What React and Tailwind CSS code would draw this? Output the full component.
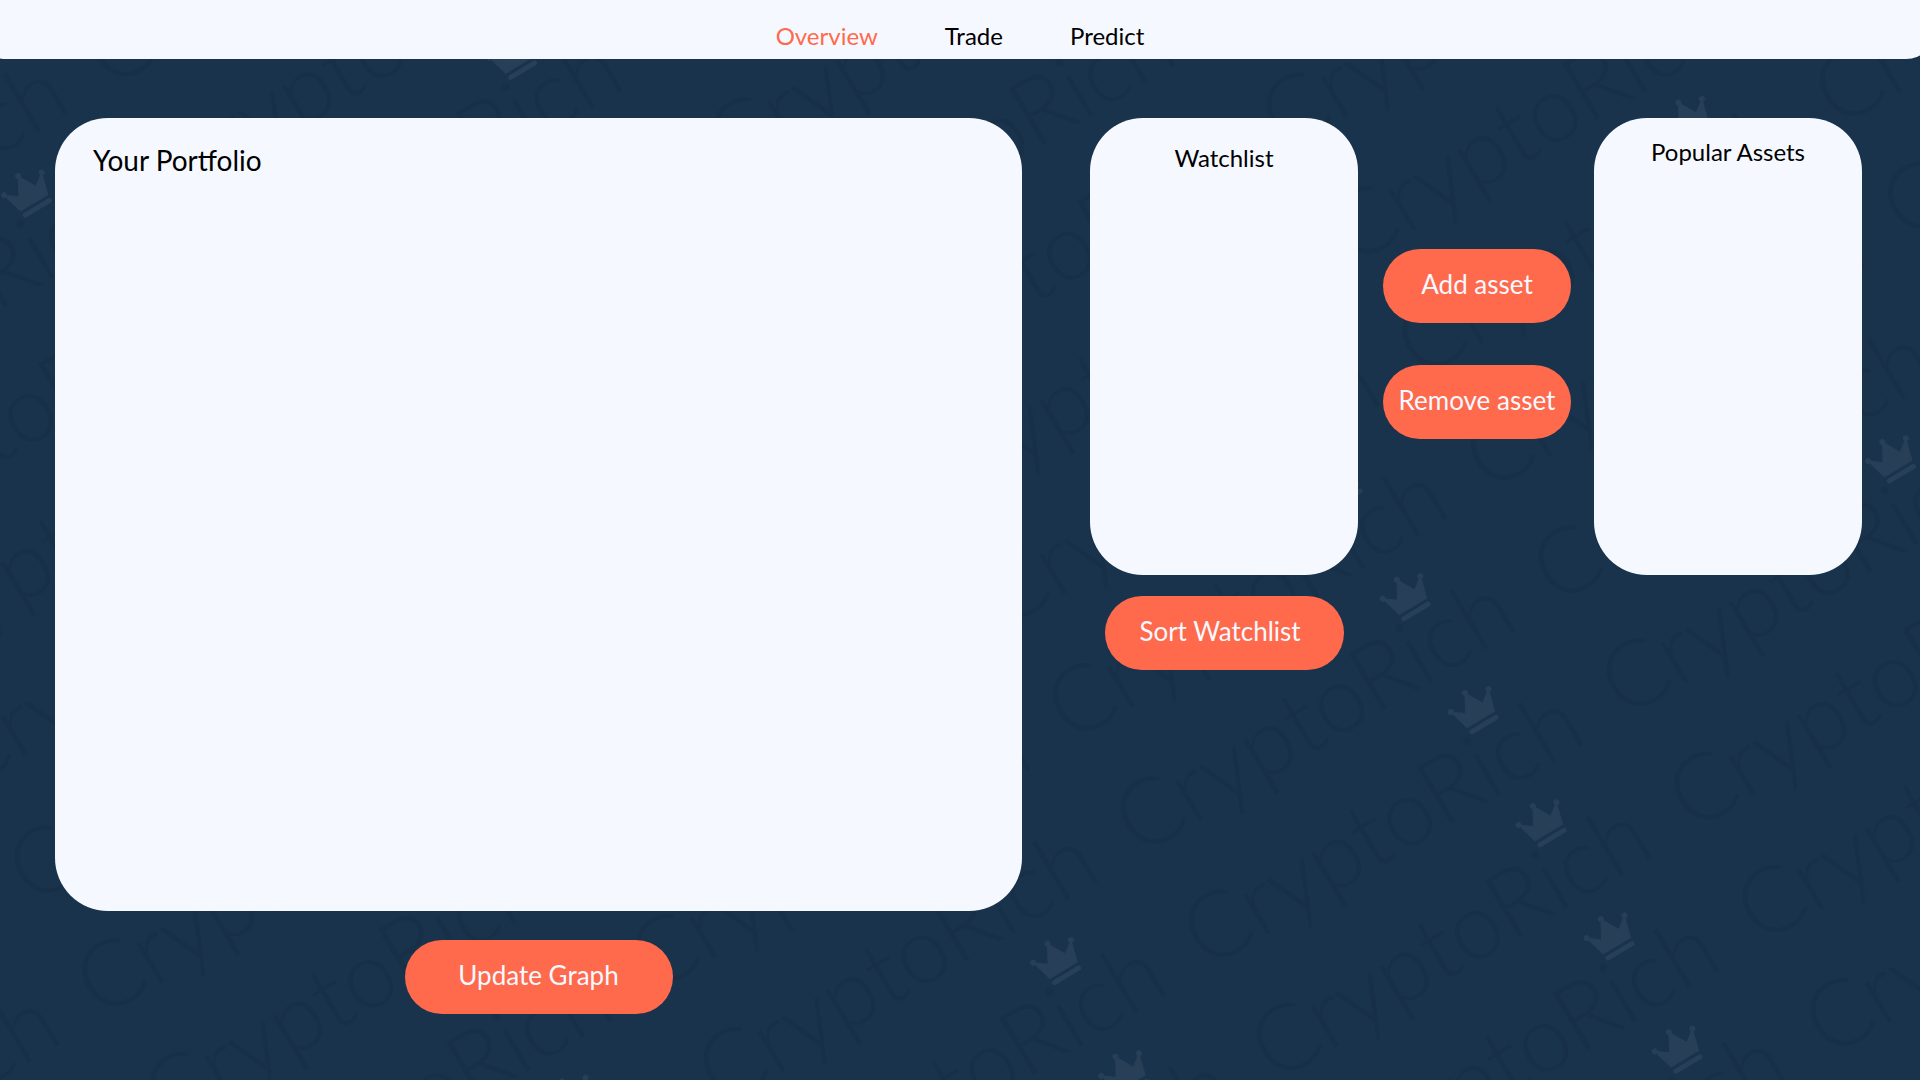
const ANGLE = (31 * Math.PI) / 180;
const ORIGIN = { x: 1405, y: 597 };
const COLUMN_PITCH = 487;
const ROW_PITCH = 132;

// Tiles of the slanted grid whose word or crown reaches the visible area.
const TILES = [];
for (let row = -10; row <= 13; row += 1) {
  for (let col = -4; col <= 3; col += 1) {
    const u = col * COLUMN_PITCH;
    const v = row * ROW_PITCH;
    const x = ORIGIN.x + u * Math.cos(ANGLE) + v * Math.sin(ANGLE);
    const y = ORIGIN.y - u * Math.sin(ANGLE) + v * Math.cos(ANGLE);
    if (x > -130 && x < 2240 && y > -230 && y < 1110) {
      TILES.push({ key: `${row}:${col}`, u, v });
    }
  }
}

function Watermark() {
  return (
    <svg
      aria-hidden="true"
      className="pointer-events-none absolute inset-0 -z-10 h-full w-full"
    >
      <defs>
        <g id="crown" fill="#283f58" stroke="#283f58">
          <path
            d="M-20 -10 L-8 -1 L2 -19 L12 -1 L24 -10 L18 12 L-14 12 Z"
            strokeWidth="1"
            strokeLinejoin="round"
          />
          <circle cx="-20" cy="-10" r="2.5" />
          <circle cx="2" cy="-19" r="2.5" />
          <circle cx="24" cy="-10" r="2.5" />
          <path d="M-12 18 H16" strokeWidth="5" strokeLinecap="round" />
        </g>
      </defs>
      <g transform={`translate(${ORIGIN.x} ${ORIGIN.y}) rotate(-31)`}>
        {TILES.map(({ key, u, v }) => (
          <g key={key} transform={`translate(${u} ${v})`}>
            <text
              x="-362"
              y="86"
              fill="#182f48"
              className="font-['Lato',sans-serif] text-[93px] font-light"
            >
              CryptoRich
            </text>
            <use href="#crown" />
          </g>
        ))}
      </g>
    </svg>
  );
}

function Panel({ title, className, titleClassName }) {
  return (
    <section className={`rounded-[53px] bg-[#f5f9ff] ${className}`}>
      <h2 className={titleClassName}>{title}</h2>
    </section>
  );
}

function ActionButton({ children, className = "" }) {
  return (
    <button
      type="button"
      className={`h-[74px] cursor-pointer rounded-[37px] bg-[#ff6a4d] pb-1 text-center text-[26px] whitespace-nowrap text-[#f5f9ff] ${className}`}
    >
      {children}
    </button>
  );
}

export default function App() {
  return (
    <div className="relative isolate min-h-screen overflow-hidden bg-[#1a334c] font-['Lato',sans-serif] text-black">
      <Watermark />

      <nav className="-mr-4 -ml-6 flex h-[59px] justify-center gap-[67px] rounded-b-[30px] bg-[#f5f9ff] pt-5 pl-2 text-2xl">
        <a href="#overview" aria-current="page" className="text-[#ff6a4d]">
          Overview
        </a>
        <a href="#trade">Trade</a>
        <a href="#predict">Predict</a>
      </nav>

      <main className="flex items-start pt-[59px] pr-[58px] pb-[66px] pl-[55px]">
        <div className="flex flex-1 flex-col items-center gap-[29px]">
          <Panel
            title="Your Portfolio"
            className="min-h-[793px] w-full px-[38px] pt-6"
            titleClassName="text-[28px] leading-9"
          />
          <ActionButton className="w-[268px]">Update Graph</ActionButton>
        </div>

        <div className="ml-[68px] flex w-[268px] flex-col items-center gap-[21px]">
          <Panel
            title="Watchlist"
            className="min-h-[457px] w-full pt-6 text-center"
            titleClassName="text-2xl"
          />
          <ActionButton className="w-[239px] pr-2">Sort Watchlist</ActionButton>
        </div>

        <div className="mt-[131px] ml-[25px] flex w-[188px] flex-col gap-[42px]">
          <ActionButton>Add asset</ActionButton>
          <ActionButton>Remove asset</ActionButton>
        </div>

        <Panel
          title="Popular Assets"
          className="ml-[23px] min-h-[457px] w-[268px] pt-[18px] text-center"
          titleClassName="text-2xl"
        />
      </main>
    </div>
  );
}
